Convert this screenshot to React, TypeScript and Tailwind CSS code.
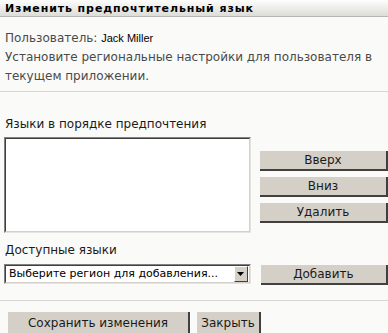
import React from "react"

const font = { fontFamily: '"DejaVu Sans", Verdana, sans-serif' }

function Btn({ label, className = "" }: { label: string; className?: string }) {
  return (
    <button
      className={`flex items-center justify-center bg-[#d4d0c8] border-r-2 border-b-2 border-[#404040] text-[12px] text-[#1a1a1a] ${className}`}
    >
      {label}
    </button>
  )
}

function Inset({ className = "", children }: { className?: string; children?: React.ReactNode }) {
  return (
    <div className={`border border-t-[#808080] border-l-[#808080] border-r-[#e6e3dc] border-b-[#e6e3dc] ${className}`}>
      <div className="h-full w-full border border-t-[#404040] border-l-[#404040] border-r-[#d4d0c8] border-b-[#d4d0c8] bg-white">
        {children}
      </div>
    </div>
  )
}

export default function App() {
  return (
    <div className="w-[388px] h-[333px] overflow-hidden bg-[#fafaf8]" style={font}>
      <div className="h-[17px] border-b border-[#b4b4b0] bg-gradient-to-b from-[#fdfdfc] to-[#dcdcd8] px-[5px] flex items-center">
        <span className="text-[11px] font-bold tracking-[0.9px] text-black leading-none">
          Изменить предпочтительный язык
        </span>
      </div>

      <div className="mt-[12px] px-[5px] text-[12px] leading-[19px] text-[#4a4a4a]">
        <div>
          Пользователь:{" "}
          <span className="text-[11px] text-black" style={{ fontFamily: '"Liberation Sans", Arial, sans-serif' }}>
            Jack Miller
          </span>
        </div>
        <div>Установите региональные настройки для пользователя в</div>
        <div>текущем приложении.</div>
      </div>

      <div className="mt-[5px] h-px bg-[#d6d6d2]" />

      <div className="mt-[25px] px-[5px] text-[12px] leading-[14px] text-[#1a1a1a]">Языки в порядке предпочтения</div>

      <div className="mt-[6px] flex pl-[4px]">
        <Inset className="w-[249px] h-[96px]" />
        <div className="ml-[9px] pt-[14px] flex flex-col gap-[6px]">
          <Btn label="Вверх" className="w-[128px] h-[20px]" />
          <Btn label="Вниз" className="w-[128px] h-[20px]" />
          <Btn label="Удалить" className="w-[128px] h-[20px]" />
        </div>
      </div>

      <div className="mt-[10px] px-[5px] text-[12px] leading-[14px] text-[#1a1a1a]">Доступные языки</div>

      <div className="mt-[7px] flex pl-[4px]">
        <Inset className="w-[248px] h-[20px]">
          <div className="flex h-full items-center">
            <span className="flex-1 pl-[3px] text-[11px] text-black whitespace-nowrap">
              Выберите регион для добавления...
            </span>
            <div className="mr-[1px] flex h-[16px] w-[14px] items-center justify-center border border-t-white border-l-white border-r-[#404040] border-b-[#404040] bg-[#d4d0c8]">
              <svg width="7" height="4" viewBox="0 0 7 4">
                <path d="M0 0h7L3.5 4z" fill="#000" />
              </svg>
            </div>
          </div>
        </Inset>
        <Btn label="Добавить" className="ml-[10px] mt-px w-[128px] h-[20px]" />
      </div>

      <div className="mt-[15px] h-px bg-[#d6d6d2]" />

      <div className="mt-[11px] flex gap-[7px] pl-[8px]">
        <Btn label="Сохранить изменения" className="w-[182px] h-[24px]" />
        <Btn label="Закрыть" className="w-[64px] h-[24px]" />
      </div>
    </div>
  )
}
